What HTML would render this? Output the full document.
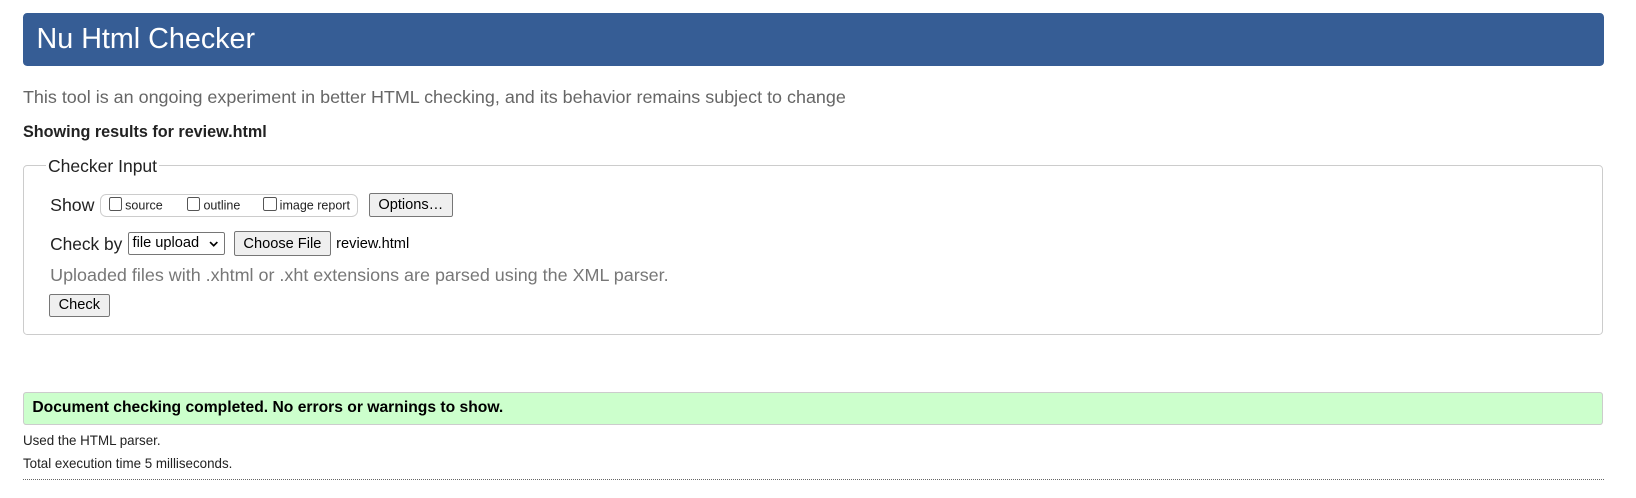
<!DOCTYPE html>
<html><head><meta charset="utf-8"><style>
html,body{margin:0;padding:0;background:#fff;width:1636px;height:498px;overflow:hidden}
#w{zoom:1.044;position:relative;width:1567px;height:477px;font-family:"Liberation Sans",Arial,sans-serif;color:#222}
.a{position:absolute;white-space:nowrap}
.btn{position:absolute;box-sizing:border-box;border:1px solid #767676;background:#efefef;border-radius:2px;font-size:14px;color:#000;text-align:center}
.cb{display:inline-block;width:11px;height:11px;border:1px solid #555;border-radius:2px;vertical-align:-1px;margin-right:3px;background:#fff}
</style></head><body><div id="w">
<div class="a" style="left:22px;top:12px;width:1514px;height:51px;background:#365d95;border-radius:4px"></div>
<div class="a" style="left:35px;top:22px;font-size:27.5px;line-height:32px;color:#fff">Nu Html Checker</div>
<div class="a" style="left:22px;top:83px;font-size:17.2px;line-height:20px;color:#666">This tool is an ongoing experiment in better HTML checking, and its behavior remains subject to change</div>
<div class="a" style="left:22px;top:117px;font-size:15.5px;line-height:20px;font-weight:bold">Showing results for review.html</div>
<div class="a" style="left:22px;top:158px;width:1512px;height:161px;border:1px solid #ccc;border-radius:4px"></div>
<div class="a" style="left:44px;top:149px;font-size:16.8px;line-height:20px;background:#fff;padding:0 2px">Checker Input</div>
<div class="a" style="left:48px;top:187px;font-size:17px;line-height:20px">Show</div>
<div class="a" style="left:96px;top:186px;width:245px;height:20px;border:1px solid #ccc;border-radius:6px"></div>
<div class="a" style="left:104px;top:189px;font-size:12px;line-height:16px"><span class="cb"></span>source</div>
<div class="a" style="left:179px;top:189px;font-size:12px;line-height:16px"><span class="cb"></span>outline</div>
<div class="a" style="left:252px;top:189px;font-size:12px;line-height:16px"><span class="cb"></span>image report</div>
<div class="btn" style="left:353px;top:185px;width:81px;height:23px;line-height:22px">Options…</div>
<div class="a" style="left:48px;top:224px;font-size:16.6px;line-height:20px">Check by</div>
<div class="a" style="left:123px;top:222px;width:91px;height:20px;border:1px solid #767676;border-radius:2px;font-size:14px;line-height:21px;color:#000;box-sizing:content-box"><span style="padding-left:3px">file upload</span><svg style="position:absolute;right:6px;top:8px" width="9" height="6" viewBox="0 0 9 6"><path d="M1 1l3.5 3.5L8 1" stroke="#000" stroke-width="1.6" fill="none"/></svg></div>
<div class="btn" style="left:224px;top:221px;width:93px;height:24px;line-height:23px">Choose File</div>
<div class="a" style="left:322px;top:225px;font-size:14px;line-height:18px;color:#000">review.html</div>
<div class="a" style="left:48px;top:254px;font-size:17.2px;line-height:20px;color:#777">Uploaded files with .xhtml or .xht extensions are parsed using the XML parser.</div>
<div class="btn" style="left:47px;top:282px;width:58px;height:22px;line-height:21px">Check</div>
<div class="a" style="left:22px;top:375px;width:1512px;height:30px;background:#ccffcc;border:1px solid #ccc;border-radius:3px"></div>
<div class="a" style="left:31px;top:382px;font-size:15px;line-height:18px;font-weight:bold;color:#000">Document checking completed. No errors or warnings to show.</div>
<div class="a" style="left:22px;top:415px;font-size:12.8px;line-height:15px">Used the HTML parser.</div>
<div class="a" style="left:22px;top:437px;font-size:12.8px;line-height:15px">Total execution time 5 milliseconds.</div>
<div class="a" style="left:22px;top:459px;width:1514px;border-top:1px dotted #666"></div>
</div></body></html>
